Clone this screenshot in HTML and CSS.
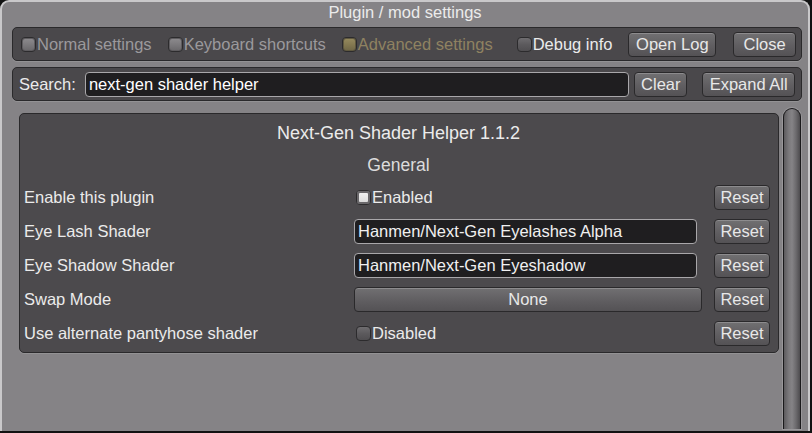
FILE: index.html
```html
<!DOCTYPE html>
<html>
<head>
    <title>Plugin / mod settings</title>
    <link rel="stylesheet" href="styles.css">
</head>
<body>

<div class="window">
    <div class="title">Plugin / mod settings</div>

    <div class="bar toolbar">
        <span class="toggle dim"><i class="box grey"></i>Normal settings</span>
        <span class="toggle dim"><i class="box grey"></i>Keyboard shortcuts</span>
        <span class="toggle gold"><i class="box olive"></i>Advanced settings</span>
        <span class="toggle debug"><i class="box off"></i>Debug info</span>
        <button class="btn openlog">Open Log</button>
        <button class="btn close">Close</button>
    </div>

    <div class="bar searchbar">
        <label for="search">Search:</label>
        <input id="search" class="field search" type="text" value="next-gen shader helper">
        <button class="btn clear">Clear</button>
        <button class="btn expand">Expand All</button>
    </div>

    <div class="main">
        <div class="list">
            <div class="panel">
                <div class="ptitle">Next-Gen Shader Helper 1.1.2</div>
                <div class="section">General</div>
                <div class="rows">
                    <div class="row">
                        <span class="label">Enable this plugin</span>
                        <span class="ctrl"><span class="toggle"><i class="box on"></i>Enabled</span></span>
                        <button class="btn reset">Reset</button>
                    </div>
                    <div class="row">
                        <span class="label">Eye Lash Shader</span>
                        <span class="ctrl"><input class="field text" type="text" value="Hanmen/Next-Gen Eyelashes Alpha"></span>
                        <button class="btn reset">Reset</button>
                    </div>
                    <div class="row">
                        <span class="label">Eye Shadow Shader</span>
                        <span class="ctrl"><input class="field text" type="text" value="Hanmen/Next-Gen Eyeshadow"></span>
                        <button class="btn reset">Reset</button>
                    </div>
                    <div class="row">
                        <span class="label">Swap Mode</span>
                        <span class="ctrl"><button class="btn dropdown">None</button></span>
                        <button class="btn reset">Reset</button>
                    </div>
                    <div class="row">
                        <span class="label">Use alternate pantyhose shader</span>
                        <span class="ctrl"><span class="toggle"><i class="box off"></i>Disabled</span></span>
                        <button class="btn reset">Reset</button>
                    </div>
                </div>
            </div>
        </div>
        <div class="scrollbar"></div>
    </div>
</div>

</body>
</html>
```

FILE: styles.css
```css
html, body {
    margin: 0;
    padding: 0;
    background-color: #121212;
    height: 433px;
    overflow: hidden;
}

body {
    font-family: "Liberation Sans", Arial, sans-serif;
    font-size: 16.5px;
    color: #ebebeb;
}

.window {
    box-sizing: border-box;
    width: 810px;
    height: 431px;
    background-color: #858386;
    border: 2px solid #c9c8ca;
    border-bottom: none;
    border-radius: 9px 9px 0 0;
    overflow: hidden;
}

.title {
    height: 25px;
    line-height: 21px;
    text-align: center;
}

.bar {
    box-sizing: border-box;
    height: 34px;
    margin: 0 6px 0 10px;
    background-color: #4a484b;
    border: 1px solid #2a292b;
    border-radius: 5px;
    display: flex;
    align-items: center;
    box-shadow: 0 1px 0 rgba(255, 255, 255, 0.12);
}

.toolbar {
    padding: 0 5px 0 8px;
}

.searchbar {
    margin-top: 6px;
    padding: 0 6px 0 6px;
}

.toggle {
    display: inline-flex;
    align-items: center;
    white-space: nowrap;
}

.toolbar .toggle {
    margin-right: 16px;
}

.toolbar .toggle.gold {
    margin-right: 24px;
}

.dim {
    color: #9b999c;
}

.gold {
    color: #8f8261;
}

.box {
    display: inline-block;
    flex-shrink: 0;
    box-sizing: border-box;
    width: 15px;
    height: 15px;
    margin-right: 1px;
    border-radius: 4px;
    border: 1px solid #2c2b2d;
}

.box.grey {
    background: linear-gradient(#8d8b8e, #7c7a7d 50%, #69676a);
    box-shadow: inset 0 0 0 1px #5e5c5f;
}

.box.olive {
    background: linear-gradient(#978b5f, #847951 50%, #6f6646);
    box-shadow: inset 0 0 0 1px #5f583f;
}

.box.off {
    background: linear-gradient(#6f6d70, #5c5a5d 50%, #504e51);
}

.box.on {
    background: linear-gradient(#f4f4f4, #d8d8d8);
    box-shadow: inset 0 0 0 2px #6a686b;
}

.btn {
    box-sizing: border-box;
    height: 25px;
    padding: 0;
    font-family: inherit;
    font-size: 16.5px;
    color: #e8e8e8;
    background: linear-gradient(#717072, #605e61 55%, #545255);
    border: 1px solid #2a292b;
    border-radius: 4px;
    box-shadow: inset 0 1px 0 rgba(255, 255, 255, 0.2);
    cursor: pointer;
}

.openlog {
    width: 91px;
    margin-left: auto;
}

.close {
    width: 65px;
    margin-left: 17px;
}

.searchbar label {
    margin-right: 9px;
}

.field {
    box-sizing: border-box;
    height: 25px;
    padding: 0 3px;
    font-family: inherit;
    font-size: 16.5px;
    color: #f0f0f0;
    background-color: #1f1e20;
    border: 1px solid #a9a7aa;
    border-radius: 4px;
    outline: none;
}

.search {
    width: 546px;
    color: #ffffff;
}

.clear {
    width: 53px;
    margin-left: 5px;
}

.expand {
    width: 93px;
    margin-left: 15px;
}

.main {
    display: flex;
    height: 321px;
    margin-top: 7px;
}

.list {
    flex: 1;
    padding: 5px 4px 0 17px;
}

.panel {
    box-sizing: border-box;
    background-color: #4c4a4d;
    border: 1px solid #2a292b;
    border-radius: 5px;
    padding: 7px 5px 6px 4px;
    box-shadow: 0 1px 0 rgba(255, 255, 255, 0.12);
}

.ptitle {
    height: 24px;
    line-height: 24px;
    font-size: 18px;
    text-align: center;
}

.section {
    margin-top: 9px;
    height: 22px;
    line-height: 22px;
    font-size: 17.5px;
    text-align: center;
    color: #dcdcdc;
}

.rows {
    margin-top: 9px;
    display: flex;
    flex-direction: column;
    gap: 9px;
}

.row {
    display: flex;
    align-items: center;
    height: 25px;
}

.label {
    width: 330px;
}

.ctrl {
    width: 360px;
    display: flex;
    align-items: center;
}

.ctrl .toggle {
    margin-left: 2px;
}

.text {
    width: 343px;
}

.dropdown {
    width: 348px;
}

.reset {
    width: 56px;
}

.scrollbar {
    box-sizing: border-box;
    width: 18px;
    margin: 0 7px 0 0;
    border: 1px solid #1a191b;
    border-bottom: none;
    border-radius: 9px 9px 0 0;
    background: linear-gradient(to right, #5d5b5e, #7b797c 30%, #858386 50%, #6c6a6d 75%, #4d4b4e);
    box-shadow: 0 0 0 1px #9a989b;
}
```
